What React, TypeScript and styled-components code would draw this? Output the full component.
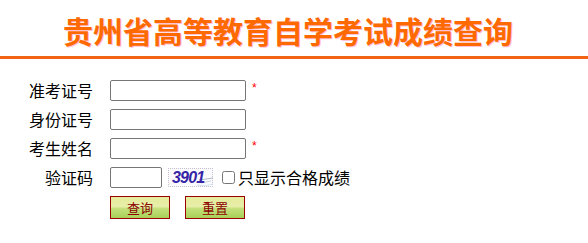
import React, { useState } from "react";
import styled, { createGlobalStyle } from "styled-components";

const GlobalStyle = createGlobalStyle`
  html, body {
    margin: 0;
    padding: 0;
    background: #fff;
    font-family: "Noto Sans CJK SC", "Noto Sans", sans-serif;
  }
`;

const fields = [
  { label: "准考证号", required: true },
  { label: "身份证号", required: false },
  { label: "考生姓名", required: true },
];

const App = () => {
  const [onlyPass, setOnlyPass] = useState(false);

  return (
    <Page>
      <GlobalStyle />
      <Header>
        <Title>贵州省高等教育自学考试成绩查询</Title>
      </Header>
      <Form onSubmit={(e) => e.preventDefault()}>
        {fields.map(({ label, required }) => (
          <React.Fragment key={label}>
            <Label>{label}</Label>
            <Field>
              <TextInput type="text" />
              {required && <Star>*</Star>}
            </Field>
          </React.Fragment>
        ))}
        <Label>验证码</Label>
        <Field>
          <TextInput type="text" $width={52} />
          <Captcha>
            <svg width="45" height="19" viewBox="0 0 45 19">
              <path d="M30 11 L44 9" stroke="#9ab" strokeWidth="0.8" fill="none" />
              <path d="M32 14 L42 12" stroke="#bcd" strokeWidth="0.8" fill="none" />
              <path d="M28 16 Q36 18 44 15" stroke="#cde" strokeWidth="0.8" fill="none" />
            </svg>
            <CaptchaText>3901</CaptchaText>
          </Captcha>
          <CheckLabel>
            <CheckBox
              type="checkbox"
              checked={onlyPass}
              onChange={(e) => setOnlyPass(e.target.checked)}
            />
            只显示合格成绩
          </CheckLabel>
        </Field>
        <span />
        <Buttons>
          <Button type="submit">查询</Button>
          <Button type="reset">重置</Button>
        </Buttons>
      </Form>
    </Page>
  );
};

export default App;

const Page = styled.div`
  width: 588px;
  height: 243px;
  overflow: hidden;
`;

const Header = styled.div`
  height: 56px;
  border-bottom: 3px solid #f06414;
  display: flex;
  justify-content: center;
  align-items: center;
  padding-right: 12px;
`;

const Title = styled.h1`
  margin: 0;
  padding-top: 3px;
  font-size: 30px;
  font-weight: bold;
  line-height: 40px;
  color: #ff6a00;
  letter-spacing: 0;
  text-shadow: 1px 1px 0 rgba(255, 120, 170, 0.45);
`;

const Form = styled.form`
  display: grid;
  grid-template-columns: 93px auto;
  column-gap: 17px;
  row-gap: 8px;
  padding-top: 21px;
  align-items: center;
`;

const Label = styled.label`
  text-align: right;
  font-size: 16px;
  line-height: 21px;
  color: #000;
`;

const Field = styled.div`
  display: flex;
  align-items: center;
  height: 21px;
`;

const TextInput = styled.input<{ $width?: number }>`
  box-sizing: border-box;
  width: ${(p) => p.$width ?? 136}px;
  height: 21px;
  margin: 0;
  padding: 1px 2px;
  border: 1px solid #767676;
  border-radius: 2px;
  font-size: 13px;
  outline: none;
`;

const Star = styled.span`
  margin-left: 6px;
  align-self: flex-start;
  margin-top: 1px;
  color: #ff0000;
  font-size: 12px;
  line-height: 14px;
  font-family: "Liberation Sans", sans-serif;
`;

const Captcha = styled.div`
  position: relative;
  box-sizing: border-box;
  width: 45px;
  height: 19px;
  margin-left: 6px;
  border: 1px dotted #c8c0d0;
  background: #fbfbfd;
  svg {
    position: absolute;
    left: 0;
    top: 0;
  }
`;

const CaptchaText = styled.span`
  position: absolute;
  left: 3px;
  top: -1px;
  font-family: "Liberation Sans", sans-serif;
  font-style: italic;
  font-weight: bold;
  font-size: 16px;
  line-height: 19px;
  color: #3524a6;
  letter-spacing: -0.8px;
`;

const CheckLabel = styled.label`
  display: flex;
  align-items: center;
  margin-left: 8px;
  font-size: 16px;
  line-height: 21px;
  color: #000;
`;

const CheckBox = styled.input`
  width: 13px;
  height: 13px;
  margin: 0 3px 0 1px;
`;

const Buttons = styled.div`
  display: flex;
  gap: 15px;
  height: 23px;
  align-items: flex-start;
`;

const Button = styled.button`
  box-sizing: border-box;
  width: 60px;
  height: 23px;
  padding: 0;
  border: 1px solid #990000;
  background: linear-gradient(
    to bottom,
    #e4ec9c 0%,
    #e8eea8 45%,
    #c4e07c 55%,
    #a8d058 100%
  );
  color: #8b0000;
  font-family: "Noto Sans CJK SC", sans-serif;
  font-size: 13px;
  line-height: 21px;
  cursor: pointer;
`;
